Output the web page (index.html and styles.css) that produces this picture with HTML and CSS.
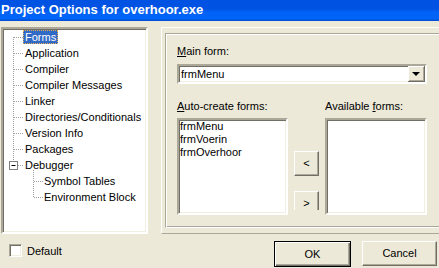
FILE: index.html
```html
<html lang="en">
<head>
    <meta charset="UTF-8">
    <title>Project Options for overhoor.exe</title>
    <link rel="stylesheet" href="styles.css">
</head>
<body>
    <div class="titlebar">Project Options for overhoor.exe</div>

    <div class="main">
        <div class="tree">
            <svg class="tree-lines" width="143" height="203">
                <g stroke="#a0a0a0" stroke-dasharray="1 1" fill="none">
                    <line x1="10.5" y1="8" x2="10.5" y2="132"/>
                    <line x1="11" y1="8.5" x2="20" y2="8.5"/>
                    <line x1="11" y1="24.5" x2="20" y2="24.5"/>
                    <line x1="11" y1="40.5" x2="20" y2="40.5"/>
                    <line x1="11" y1="56.5" x2="20" y2="56.5"/>
                    <line x1="11" y1="72.5" x2="20" y2="72.5"/>
                    <line x1="11" y1="88.5" x2="20" y2="88.5"/>
                    <line x1="11" y1="104.5" x2="20" y2="104.5"/>
                    <line x1="11" y1="120.5" x2="20" y2="120.5"/>
                    <line x1="15" y1="136.5" x2="20" y2="136.5"/>
                    <line x1="30.5" y1="141" x2="30.5" y2="168"/>
                    <line x1="31" y1="152.5" x2="40" y2="152.5"/>
                    <line x1="31" y1="168.5" x2="40" y2="168.5"/>
                </g>
                <rect x="6.5" y="132.5" width="8" height="8" fill="#fff" stroke="#808080"/>
                <line x1="8.5" y1="136.5" x2="12.5" y2="136.5" stroke="#000"/>
            </svg>
            <div class="node"><span class="selected">Forms</span></div>
            <div class="node"><span>Application</span></div>
            <div class="node"><span>Compiler</span></div>
            <div class="node"><span>Compiler Messages</span></div>
            <div class="node"><span>Linker</span></div>
            <div class="node"><span>Directories/Conditionals</span></div>
            <div class="node"><span>Version Info</span></div>
            <div class="node"><span>Packages</span></div>
            <div class="node"><span>Debugger</span></div>
            <div class="node child"><span>Symbol Tables</span></div>
            <div class="node child"><span>Environment Block</span></div>
        </div>

        <div class="page">
            <div class="group">
                <div class="label"><u>M</u>ain form:</div>
                <div class="combo">
                    <div class="combo-text">frmMenu</div>
                    <div class="combo-btn"><span class="arrow"></span></div>
                </div>
                <div class="lists">
                    <div class="col col-auto">
                        <div class="label"><u>A</u>uto-create forms:</div>
                        <div class="listbox">
                            <div>frmMenu</div>
                            <div>frmVoerin</div>
                            <div>frmOverhoor</div>
                        </div>
                    </div>
                    <div class="col col-move">
                        <div class="btn move first">&lt;</div>
                        <div class="btn move">&gt;</div>
                    </div>
                    <div class="col col-avail">
                        <div class="label">Available <u>f</u>orms:</div>
                        <div class="listbox"></div>
                    </div>
                </div>
            </div>
        </div>
    </div>

    <div class="footer">
        <div class="check">
            <span class="box"></span>
            <span>Default</span>
        </div>
        <div class="btn default">OK</div>
        <div class="btn cancel">Cancel</div>
    </div>
</body>
</html>
```

FILE: styles.css
```css
body {
    margin: 0;
    width: 439px;
    height: 268px;
    overflow: hidden;
    background: #ece9d8;
    font-family: "Liberation Sans", Arial, sans-serif;
    font-size: 11px;
    color: #000;
}
.titlebar {
    height: 21px;
    line-height: 20px;
    padding-left: 1px;
    box-sizing: border-box;
    color: #fff;
    font-weight: bold;
    font-size: 13px;
    background: linear-gradient(#0053e2 0, #0053e2 9px, #0062f6 12px, #0064f8 19px, #0050d8 20px);
    white-space: nowrap;
}
.main {
    display: flex;
    padding-top: 6px;
}
.tree {
    position: relative;
    flex-shrink: 0;
    width: 147px;
    height: 207px;
    margin-left: 1px;
    box-sizing: border-box;
    background: #fff;
    border: 2px solid;
    border-color: #aca899 #fff #fff #aca899;
    box-shadow: inset 1px 1px #716f64, inset -1px -1px #f1efe2;
}
.tree-lines {
    position: absolute;
    left: 0;
    top: 0;
}
.node {
    position: relative;
    height: 16px;
    padding-left: 20px;
}
.node.child {
    padding-left: 39px;
}
.node span {
    display: inline-block;
    margin-top: 1px;
    height: 14px;
    line-height: 14px;
    padding: 0 2px;
    box-sizing: border-box;
    white-space: nowrap;
}
.node .selected {
    background: #316ac5;
    color: #fff;
    outline: 1px dotted #e8b050;
    outline-offset: -1px;
}
.page {
    flex-shrink: 0;
    width: 290px;
    height: 207px;
    margin-left: 13px;
    box-sizing: border-box;
    border-left: 1px solid #fff;
    border-top: 1px solid #fff;
    border-bottom: 1px solid #aca899;
    padding: 5px 0 0 3px;
}
.group {
    height: 195px;
    box-sizing: border-box;
    border: 1px solid #aca899;
    border-right-color: #fff;
    border-bottom-color: #fff;
    box-shadow: inset 1px 1px #fff, inset -1px -1px #aca899;
    padding: 11px 0 0 11px;
}
.label {
    height: 13px;
    line-height: 13px;
    white-space: nowrap;
}
.combo {
    display: flex;
    width: 250px;
    height: 20px;
    margin-top: 6px;
    box-sizing: border-box;
    background: #fff;
    border: 2px solid;
    border-color: #aca899 #fff #fff #aca899;
    box-shadow: inset 1px 1px #716f64, inset -1px -1px #f1efe2;
}
.combo-text {
    flex: 1;
    line-height: 16px;
    padding-left: 2px;
}
.combo-btn {
    width: 17px;
    height: 16px;
    box-sizing: border-box;
    background: #ece9d8;
    border-right: 1px solid #716f64;
    border-bottom: 1px solid #716f64;
    box-shadow: inset 1px 1px #fff, inset -1px -1px #aca899;
    display: flex;
    align-items: center;
    justify-content: center;
}
.arrow {
    width: 0;
    height: 0;
    border-left: 4px solid transparent;
    border-right: 4px solid transparent;
    border-top: 4px solid #000;
    margin-top: 1px;
}
.lists {
    display: flex;
    gap: 6px;
    margin-top: 16px;
}
.col {
    flex-shrink: 0;
}
.col-auto {
    width: 111px;
}
.col-move {
    width: 25px;
    height: 110px;
    overflow: hidden;
}
.col-avail {
    width: 102px;
}
.listbox {
    height: 97px;
    margin-top: 5px;
    box-sizing: border-box;
    background: #fff;
    border: 2px solid;
    border-color: #aca899 #fff #fff #aca899;
    box-shadow: inset 1px 1px #716f64, inset -1px -1px #f1efe2;
    padding-left: 1px;
    line-height: 13px;
}
.btn {
    box-sizing: border-box;
    height: 25px;
    text-align: center;
    line-height: 22px;
    background: #ece9d8;
    border: 1px solid;
    border-color: #fff #716f64 #716f64 #fff;
    box-shadow: inset -1px -1px #aca899;
}
.move {
    width: 25px;
    margin-top: 15px;
}
.move.first {
    margin-top: 51px;
}
.footer {
    display: flex;
    align-items: flex-start;
    padding-top: 7px;
}
.check {
    display: flex;
    align-items: center;
    gap: 5px;
    margin: 3px 0 0 9px;
    height: 13px;
}
.box {
    width: 13px;
    height: 13px;
    box-sizing: border-box;
    background: #fff;
    border: 1px solid;
    border-color: #aca899 #fff #fff #aca899;
    box-shadow: inset 1px 1px #716f64, inset -1px -1px #f1efe2;
}
.default {
    width: 77px;
    height: 26px;
    margin-left: auto;
    border: 1px solid #000;
    box-shadow: inset 1px 1px #fff, inset -1px -1px #716f64, inset -2px -2px #aca899;
    line-height: 24px;
}
.cancel {
    width: 75px;
    height: 25px;
    margin-left: 11px;
    margin-right: 2px;
    line-height: 23px;
}
```
